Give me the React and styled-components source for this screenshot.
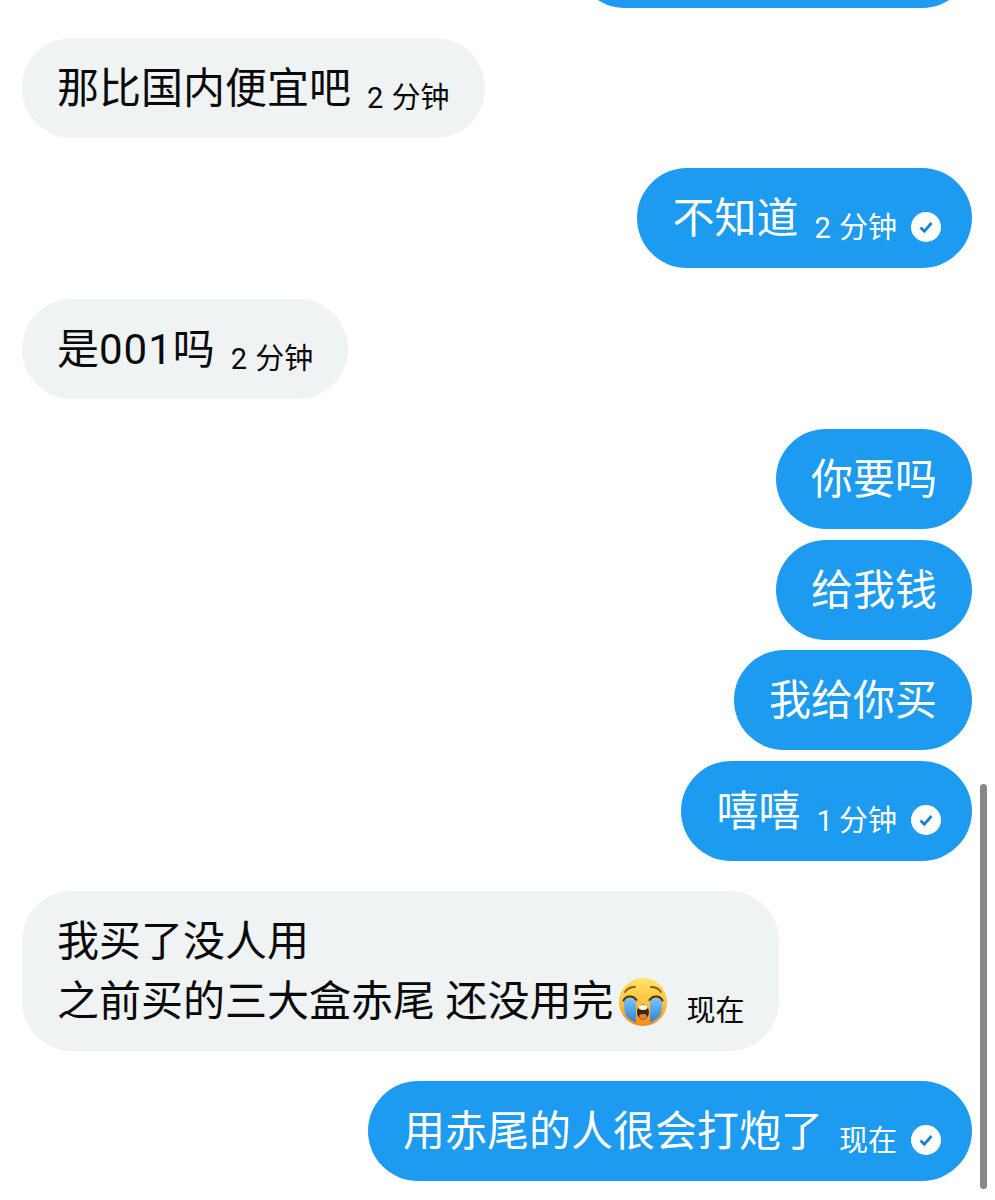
import React from "react";
import styled, { createGlobalStyle } from "styled-components";

const GlobalStyle = createGlobalStyle`
  html, body {
    margin: 0;
    padding: 0;
    background: #fff;
  }
`;

const Screen = styled.div`
  position: relative;
  width: 995px;
  height: 1200px;
  overflow: hidden;
  background: #fff;
  font-family: Roboto, "Noto Sans CJK SC", "Noto Sans", sans-serif;
`;

const Thread = styled.div`
  display: flex;
  flex-direction: column;
  gap: 30.35px;
  margin-top: -92.35px;
  padding: 0 23px 0 22px;
`;

const Group = styled.div`
  display: flex;
  flex-direction: column;
  gap: 10.5px;
  align-items: ${(p) => (p.$mine ? "flex-end" : "flex-start")};
`;

const Bubble = styled.div`
  box-sizing: border-box;
  width: ${(p) => (p.$width ? `${p.$width}px` : "auto")};
  min-height: 100px;
  padding: 21px 35px 19px;
  border-radius: 50px;
  background: ${(p) => (p.$mine ? "#1d9bf0" : "#eff3f4")};
  color: ${(p) => (p.$mine ? "#fff" : "#0a0a0a")};
  font-size: 42px;
  line-height: 60px;
  white-space: nowrap;
`;

const Line = styled.div`
  display: flex;
  align-items: center;
  height: 60px;
`;

const Digits = styled.span`
  letter-spacing: 1px;
`;

const Meta = styled.span`
  margin-left: ${(p) => p.$gap || 16}px;
  padding-top: 18px;
  font-size: 29px;
  line-height: 40px;
  word-spacing: ${(p) => (p.$tight ? -1 : 1)}px;
`;

const Tick = styled.svg`
  flex: none;
  width: 30px;
  height: 30px;
  margin: 16px -4px 0 14px;
`;

const Emoji = styled.svg`
  flex: none;
  width: 50px;
  height: 50px;
  margin-left: 5px;
`;

const ScrollThumb = styled.div`
  position: absolute;
  top: 784px;
  left: 980px;
  width: 7px;
  height: 405px;
  border-radius: 4px;
  background: #888;
`;

const ReadTick = () => (
  <Tick viewBox="0 0 30 30">
    <circle cx="15" cy="15" r="15" fill="#fff" />
    <path d="M9.500 15.500l3.800 3.800L20.500 11" fill="none" stroke="#1d7fd0" strokeWidth="2.800" />
  </Tick>
);

// loudly crying face
const CryingFace = () => (
  <Emoji viewBox="0 0 50 50">
    <defs>
      <linearGradient id="face" x1="0" y1="0" x2="0" y2="1">
        <stop offset="0" stopColor="#ffe66b" />
        <stop offset="0.6" stopColor="#fdbb35" />
        <stop offset="1" stopColor="#f28a17" />
      </linearGradient>
      <linearGradient id="tear" x1="0" y1="0" x2="0" y2="1">
        <stop offset="0" stopColor="#7cc6f2" />
        <stop offset="1" stopColor="#2f7fd8" />
      </linearGradient>
    </defs>
    <circle cx="25" cy="25" r="24" fill="url(#face)" />
    <path d="M6 23c3-2.500 9-2.500 12 0v22.500c-4-1.500-8-4-10.500-7.500C6 33 5.500 28 6 23z" fill="url(#tear)" />
    <path d="M44 23c-3-2.500-9-2.500-12 0v22.500c4-1.500 8-4 10.500-7.500C44 33 44.500 28 44 23z" fill="url(#tear)" />
    <path d="M5.500 23.500C8 18.500 15 18 18.500 23" fill="none" stroke="#4a3208" strokeWidth="2" strokeLinecap="round" />
    <path d="M44.500 23.500C42 18.500 35 18 31.500 23" fill="none" stroke="#4a3208" strokeWidth="2" strokeLinecap="round" />
    <path d="M7 15c2-3 6-5 10-5" fill="none" stroke="#8a5f12" strokeWidth="1.800" strokeLinecap="round" />
    <path d="M43 15c-2-3-6-5-10-5" fill="none" stroke="#8a5f12" strokeWidth="1.800" strokeLinecap="round" />
    <ellipse cx="25" cy="35" rx="6" ry="7.500" fill="#40260a" />
    <ellipse cx="25" cy="30.500" rx="4.500" ry="2.400" fill="#fff" />
    <ellipse cx="25" cy="39.500" rx="3.800" ry="2.400" fill="#e0873a" />
  </Emoji>
);

export default function App() {
  return (
    <Screen>
      <GlobalStyle />
      <Thread>
        <Group $mine>
          <Bubble $mine $width={397} />
        </Group>
        <Group>
          <Bubble>
            <Line>
              那比国内便宜吧<Meta>2 分钟</Meta>
            </Line>
          </Bubble>
        </Group>
        <Group $mine>
          <Bubble $mine>
            <Line>
              不知道<Meta>2 分钟</Meta>
              <ReadTick />
            </Line>
          </Bubble>
        </Group>
        <Group>
          <Bubble>
            <Line>
              是<Digits>001</Digits>吗<Meta>2 分钟</Meta>
            </Line>
          </Bubble>
        </Group>
        <Group $mine>
          <Bubble $mine>你要吗</Bubble>
          <Bubble $mine>给我钱</Bubble>
          <Bubble $mine>我给你买</Bubble>
          <Bubble $mine>
            <Line>
              嘻嘻<Meta $tight>1 分钟</Meta>
              <ReadTick />
            </Line>
          </Bubble>
        </Group>
        <Group>
          <Bubble>
            <Line>我买了没人用</Line>
            <Line>
              之前买的三大盒赤尾 还没用完
              <CryingFace />
              <Meta $gap={18}>现在</Meta>
            </Line>
          </Bubble>
        </Group>
        <Group $mine>
          <Bubble $mine>
            <Line>
              用赤尾的人很会打炮了<Meta>现在</Meta>
              <ReadTick />
            </Line>
          </Bubble>
        </Group>
      </Thread>
      <ScrollThumb />
    </Screen>
  );
}
